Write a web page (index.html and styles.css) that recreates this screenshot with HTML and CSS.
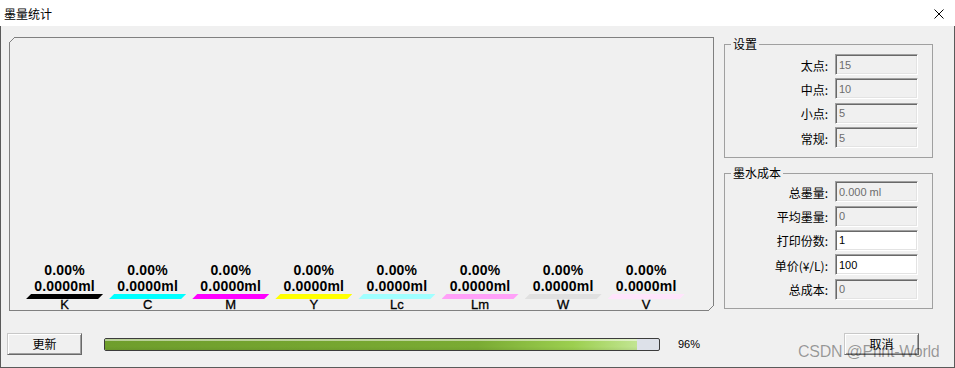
FILE: index.html
```html
<!DOCTYPE html>
<html lang="zh-CN">
<head>
    <meta charset="UTF-8">
    <title>墨量统计</title>
    <link rel="stylesheet" href="styles.css">
</head>
<body>

    <div class="window">
        <div class="titlebar">
            <span class="title">墨量统计</span>
            <svg class="close" width="10" height="10" viewBox="0 0 10 10">
                <path d="M0.5 0.5 L9.5 9.5 M9.5 0.5 L0.5 9.5" stroke="#000" stroke-width="1" fill="none"/>
            </svg>
        </div>

        <div class="client">
            <div class="main">
                <div class="chart">
                    <div class="inks">
                        <div class="ink"><div class="pct">0.00%</div><div class="vol">0.0000ml</div><div class="bar bar-k"></div><div class="name">K</div></div>
                        <div class="ink"><div class="pct">0.00%</div><div class="vol">0.0000ml</div><div class="bar bar-c"></div><div class="name">C</div></div>
                        <div class="ink"><div class="pct">0.00%</div><div class="vol">0.0000ml</div><div class="bar bar-m"></div><div class="name">M</div></div>
                        <div class="ink"><div class="pct">0.00%</div><div class="vol">0.0000ml</div><div class="bar bar-y"></div><div class="name">Y</div></div>
                        <div class="ink"><div class="pct">0.00%</div><div class="vol">0.0000ml</div><div class="bar bar-lc"></div><div class="name">Lc</div></div>
                        <div class="ink"><div class="pct">0.00%</div><div class="vol">0.0000ml</div><div class="bar bar-lm"></div><div class="name">Lm</div></div>
                        <div class="ink"><div class="pct">0.00%</div><div class="vol">0.0000ml</div><div class="bar bar-w"></div><div class="name">W</div></div>
                        <div class="ink"><div class="pct">0.00%</div><div class="vol">0.0000ml</div><div class="bar bar-v"></div><div class="name">V</div></div>
                    </div>
                </div>

                <div class="side">
                    <fieldset class="group group-settings">
                        <legend>设置</legend>
                        <div class="rows">
                            <div class="row"><label>太点:</label><input class="field" type="text" value="15" disabled></div>
                            <div class="row"><label>中点:</label><input class="field" type="text" value="10" disabled></div>
                            <div class="row"><label>小点:</label><input class="field" type="text" value="5" disabled></div>
                            <div class="row"><label>常规:</label><input class="field" type="text" value="5" disabled></div>
                        </div>
                    </fieldset>

                    <fieldset class="group group-cost">
                        <legend>墨水成本</legend>
                        <div class="rows">
                            <div class="row"><label>总墨量:</label><input class="field" type="text" value="0.000 ml" disabled></div>
                            <div class="row"><label>平均墨量:</label><input class="field" type="text" value="0" disabled></div>
                            <div class="row"><label>打印份数:</label><input class="field on" type="text" value="1"></div>
                            <div class="row"><label>单价(¥/L):</label><input class="field on" type="text" value="100"></div>
                            <div class="row"><label>总成本:</label><input class="field" type="text" value="0" disabled></div>
                        </div>
                    </fieldset>
                </div>
            </div>

            <div class="footer">
                <button class="btn" type="button">更新</button>
                <div class="progress"><div class="progress-fill" style="width: 96%"></div></div>
                <span class="progress-text">96%</span>
                <button class="btn btn-cancel" type="button">取消</button>
            </div>

            <div class="watermark">CSDN @Print-World</div>
        </div>
    </div>

</body>
</html>
```

FILE: styles.css
```css
body {
    margin: 0;
    background-color: #f0f0f0;
}

.window {
    width: 955px;
    height: 368px;
    display: flex;
    flex-direction: column;
    font-family: "Noto Sans CJK SC", sans-serif;
    font-size: 12px;
    color: #000;
}

/* title bar */
.titlebar {
    height: 26px;
    flex: none;
    box-sizing: border-box;
    padding: 2px 11px 0 4px;
    background-color: #fff;
    display: flex;
    align-items: center;
    justify-content: space-between;
}

.title {
    line-height: 14px;
}

/* dialog body */
.client {
    flex: 1;
    position: relative;
    box-sizing: border-box;
    padding: 11px 0 0 6px;
    border: 1px solid #5a5a5a;
    border-top: 0;
    background-color: #f0f0f0;
    display: flex;
    flex-direction: column;
}

.main {
    display: flex;
    align-items: flex-start;
    gap: 10px;
    padding-left: 2px;
}

/* ink chart */
.chart {
    position: relative;
    width: 705px;
    height: 274px;
    box-sizing: border-box;
    border: 1px solid #808080;
    display: flex;
    align-items: flex-end;
}

.chart::before,
.chart::after {
    content: "";
    position: absolute;
    width: 6px;
    height: 6px;
}

.chart::before {
    top: -1px;
    left: -1px;
    background: linear-gradient(to bottom right, #f0f0f0 calc(50% - 0.6px), #808080 calc(50% - 0.6px), #808080 calc(50% + 0.6px), #f0f0f0 calc(50% + 0.6px));
}

.chart::after {
    bottom: -1px;
    right: -1px;
    background: linear-gradient(to top left, #f0f0f0 calc(50% - 0.6px), #808080 calc(50% - 0.6px), #808080 calc(50% + 0.6px), #f0f0f0 calc(50% + 0.6px));
}

.inks {
    display: grid;
    grid-template-columns: repeat(8, 83.1px);
    padding-left: 13px;
}

.ink {
    text-align: center;
    font-family: "Liberation Sans", Arial, sans-serif;
    font-weight: bold;
}

.pct,
.vol {
    font-size: 14px;
    line-height: 16px;
    letter-spacing: 0.2px;
}

.bar {
    width: 77px;
    height: 5px;
    margin: 0 auto;
    clip-path: polygon(5px 0, 100% 0, calc(100% - 5px) 100%, 0 100%);
}

.bar-k  { background-color: #000; }
.bar-c  { background-color: #00ffff; }
.bar-m  { background-color: #ff00ff; }
.bar-y  { background-color: #ffff00; }
.bar-lc { background-color: #a0ffff; }
.bar-lm { background-color: #ffa0f8; }
.bar-w  { background-color: #e0e0e0; }
.bar-v  { background-color: #ffe4fc; }

.name {
    font-size: 13px;
    font-weight: normal;
    -webkit-text-stroke: 0.3px #000;
    line-height: 10px;
    padding-top: 1px;
}

/* right side group boxes */
.side {
    width: 209px;
    display: flex;
    flex-direction: column;
    gap: 8px;
}

.group {
    margin: 0;
    min-width: 0;
    border: 1px solid #a0a0a0;
    padding: 3px 14px 9px 6px;
}

.group-cost {
    padding-top: 1px;
    padding-bottom: 8px;
}

.group legend {
    padding: 0 2px;
    font-size: 12px;
    line-height: 14px;
}

.rows {
    display: flex;
    flex-direction: column;
    gap: 3.4px;
}

.row {
    display: flex;
    justify-content: flex-end;
    align-items: center;
    gap: 7px;
}

.row label {
    line-height: 14px;
    padding-top: 2px;
}

.field {
    width: 83px;
    height: 21px;
    box-sizing: border-box;
    margin: 0;
    padding: 0 0 0 3px;
    border: 1px solid;
    border-color: #a0a0a0 #fff #fff #a0a0a0;
    box-shadow: inset 1px 1px #696969, inset -1px -1px #e3e3e3;
    border-radius: 0;
    outline: none;
    background-color: #f0f0f0;
    color: #6d6d6d;
    font-family: "Liberation Sans", Arial, sans-serif;
    font-size: 11px;
}

.field.on {
    background-color: #fff;
    color: #000;
}

/* bottom buttons and progress */
.footer {
    display: flex;
    align-items: center;
    margin-top: 22px;
    margin-right: 35px;
}

.btn {
    width: 75px;
    height: 22px;
    margin: 0;
    padding: 0;
    box-sizing: border-box;
    border: 1px solid;
    border-color: #c8c8c8 #696969 #696969 #c8c8c8;
    box-shadow: inset 1px 1px #fff, inset -1px -1px #a0a0a0;
    border-radius: 0;
    background-color: #f0f0f0;
    font-family: "Noto Sans CJK SC", sans-serif;
    font-size: 12px;
    line-height: 14px;
    color: #000;
}

.btn-cancel {
    margin-left: auto;
}

.progress {
    width: 556px;
    height: 13px;
    margin-left: 22px;
    box-sizing: border-box;
    border: 1px solid #3c3c3c;
    border-radius: 2px;
    background-color: #dde1e9;
    overflow: hidden;
}

.progress-fill {
    height: 100%;
    background:
        linear-gradient(to bottom, rgba(255, 255, 255, 0.5) 0, rgba(255, 255, 255, 0.5) 2px, rgba(255, 255, 255, 0) 2px, rgba(0, 0, 0, 0) 70%, rgba(0, 0, 0, 0.06) 100%),
        linear-gradient(to right, #6f9e2c 0%, #7aab33 70%, #9ccf4f 88%, #c2e592 100%);
}

.progress-text {
    margin-left: 18px;
    font-family: "Liberation Sans", Arial, sans-serif;
    font-size: 11px;
}

/* csdn watermark over the dialog */
.watermark {
    position: absolute;
    left: 797px;
    top: 318px;
    font-family: "Liberation Sans", Arial, sans-serif;
    font-size: 16px;
    line-height: 16px;
    letter-spacing: -0.25px;
    color: rgba(0, 0, 0, 0.38);
    white-space: nowrap;
    pointer-events: none;
}
```
